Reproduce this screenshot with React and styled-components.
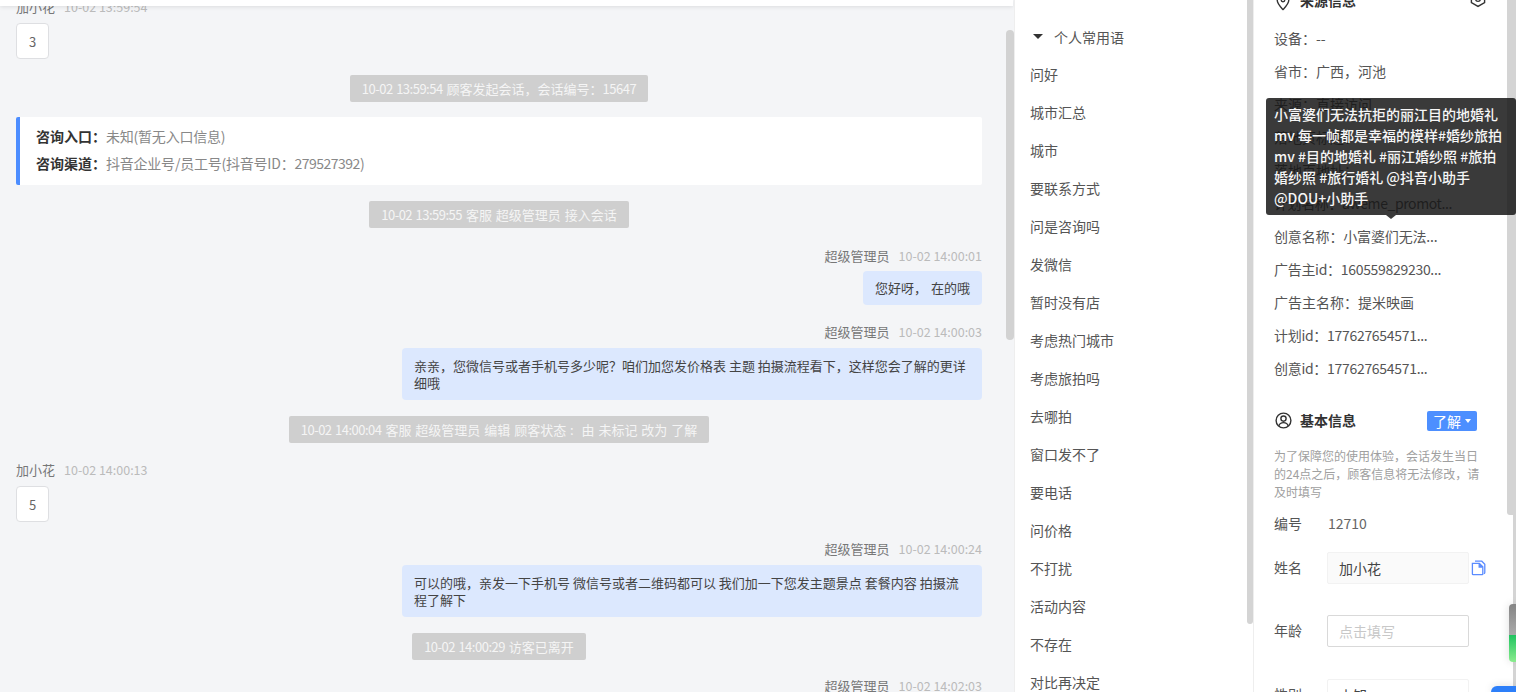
import React from "react";
import styled, { createGlobalStyle } from "styled-components";

const Global = createGlobalStyle`
  html, body { margin: 0; padding: 0; height: 100%; overflow: hidden; background: #fff; }
  body { font-family: "Noto Sans CJK SC", "Liberation Sans", sans-serif; font-size: 14px; color: #333; }
  * { box-sizing: border-box; }
`;

const Page = styled.div`
  display: grid;
  grid-template-columns: 1014px 240px 262px;
  height: 692px;
  overflow: hidden;
  position: relative;
`;

/* ---------- chat column ---------- */
const Chat = styled.section`
  position: relative;
  height: 692px;
  overflow: hidden;
  background: #f4f5f7;
`;
const TopBar = styled.div`
  position: absolute;
  z-index: 2;
  left: 0;
  top: 0;
  width: 1013px;
  height: 6px;
  background: #fff;
  box-shadow: 0 1px 4px rgba(0, 0, 0, 0.1);
`;
const ChatThumb = styled.div`
  position: absolute;
  left: 1006px;
  top: 30px;
  width: 8px;
  height: 310px;
  border-radius: 4px;
  background: #d2d2d2;
`;
const Log = styled.div`
  display: flex;
  flex-direction: column;
  margin-top: -3px;
  padding: 0 32px 0 16px;
`;
const Message = styled.div`
  display: flex;
  flex-direction: column;
  align-items: ${(p) => (p.$mine ? "flex-end" : "flex-start")};
  gap: ${(p) => p.$gap ?? 6}px;
  margin-top: ${(p) => p.$top ?? 17}px;
`;
const Meta = styled.div`
  display: flex;
  align-items: center;
  gap: 9px;
  height: 20px;
  line-height: 20px;
  font-size: 13px;
  color: #777;
`;
const Time = styled.span`
  color: #bbb;
  font-size: 12.5px;
`;
const Bubble = styled.div`
  max-width: 580px;
  padding: ${(p) => (p.$compact ? "8px 12px" : "9px 12px")};
  border-radius: 4px;
  background: #dce8fe;
  font-size: 13px;
  line-height: ${(p) => (p.$compact ? 18 : 17)}px;
  word-spacing: ${(p) => (p.$compact ? 1 : 0)}px;
  color: #444;
`;
const Reply = styled.div`
  display: flex;
  align-items: center;
  justify-content: center;
  width: 33px;
  height: 36px;
  border: 1px solid #dedfe2;
  border-radius: 4px;
  background: #fff;
  font-size: 13px;
  color: #666;
`;
const System = styled.div`
  align-self: center;
  height: 27px;
  margin-top: ${(p) => p.$top ?? 16}px;
  padding: 0 12px;
  border-radius: 2px;
  background: #cfcfcf;
  color: #f5f5f5;
  font-size: 13px;
  line-height: 28px;
  word-spacing: 1px;
  white-space: nowrap;
`;
const Digits = styled.span`
  letter-spacing: -0.5px;
`;
const EntryCard = styled.div`
  margin-top: 15px;
  padding: 6px 16px 8px;
  border-left: 4px solid #4c8dff;
  border-radius: 2px;
  background: #fff;
`;
const EntryRow = styled.div`
  height: 27px;
  line-height: 27px;
  font-size: 14px;
  color: #888;
`;
const EntryLabel = styled.span`
  color: #333;
  font-weight: 700;
`;
const EntryValue = styled.span`
  letter-spacing: -0.22px;
`;

/* ---------- phrases column ---------- */
const Phrases = styled.section`
  position: relative;
  height: 692px;
  overflow: hidden;
  padding: 18px 0 0 15px;
  background: #fff;
  border-left: 1px solid #eee;
  border-right: 1px solid #eee;
`;
const PhraseThumb = styled.div`
  position: absolute;
  right: 0;
  top: 0;
  width: 6px;
  height: 624px;
  border-radius: 0 0 3px 3px;
  background: #d4d4d4;
`;
const GroupHead = styled.div`
  display: flex;
  align-items: center;
  height: 37px;
  padding-left: 3px;
  color: #555;
  font-size: 14px;
`;
const Caret = styled.span`
  width: 0;
  height: 0;
  margin-right: 11px;
  border-left: 5px solid transparent;
  border-right: 5px solid transparent;
  border-top: 5px solid #333;
`;
const Phrase = styled.div`
  height: 38px;
  line-height: 38px;
  font-size: 14px;
  color: #555;
`;

/* ---------- info column ---------- */
const Info = styled.section`
  position: relative;
  height: 692px;
  overflow: hidden;
  background: #fff;
`;
const InfoBody = styled.div`
  display: flex;
  flex-direction: column;
  margin-top: -10px;
  padding: 0 0 0 20px;
`;
const SectionHead = styled.div`
  display: flex;
  align-items: center;
  width: ${(p) => p.$width ?? 203}px;
  height: 20px;
  margin-top: ${(p) => p.$top ?? 0}px;
`;
const SectionTitle = styled.span`
  margin-left: ${(p) => p.$gap ?? 8}px;
  flex: 1;
  font-size: 14px;
  line-height: 20px;
  font-weight: 700;
  color: #333;
`;
const Line = styled.div`
  height: 33px;
  line-height: 33px;
  font-size: 14px;
  color: #555;
  white-space: nowrap;
  letter-spacing: ${(p) => p.$tight ?? 0}px;
`;
const Lines = styled.div`
  margin-top: 12px;
`;
const LevelButton = styled.div`
  display: flex;
  align-items: center;
  justify-content: center;
  gap: 4px;
  width: 50px;
  height: 20px;
  margin-top: 2px;
  border-radius: 2px;
  background: #4d8fff;
  color: #fff;
  font-size: 14px;
  line-height: 20px;
`;
const SmallCaret = styled.span`
  width: 0;
  height: 0;
  border-left: 3.5px solid transparent;
  border-right: 3.5px solid transparent;
  border-top: 4px solid #fff;
`;
const Note = styled.p`
  width: 208px;
  margin: 17px 0 0;
  font-size: 12px;
  line-height: 18px;
  color: #a0a0a0;
`;
const Field = styled.div`
  display: flex;
  align-items: center;
  margin-top: ${(p) => p.$top}px;
  font-size: 14px;
  color: #555;
`;
const FieldLabel = styled.span`
  width: 53px;
  flex: none;
  margin-bottom: 2px;
  line-height: 20px;
`;
const StaticValue = styled.span`
  padding-left: 1px;
  line-height: 20px;
  color: #666;
  margin-bottom: 2px;
`;
const TextInput = styled.input`
  width: 142px;
  height: 32px;
  padding: 0 11px;
  border: 1px solid ${(p) => (p.$tone === "plain" ? "#d9d9d9" : "#f2f2f2")};
  border-radius: 2px;
  outline: none;
  background: ${(p) => (p.$tone === "locked" ? "#fafafa" : "#fff")};
  font: 14px "Noto Sans CJK SC", sans-serif;
  color: #444;
  &::placeholder { color: #c8c8c8; opacity: 1; }
`;
const CopyIcon = styled.svg`
  margin-left: 2px;
  flex: none;
`;
const Tooltip = styled.div`
  position: absolute;
  z-index: 4;
  left: 12px;
  top: 98px;
  width: 250px;
  height: 117px;
  padding: 6px 8px;
  border-radius: 3px;
  background: rgba(20, 20, 20, 0.84);
  color: #f6f6f6;
  font-size: 14px;
  font-weight: 500;
  line-height: 21px;
  &::after {
    content: "";
    position: absolute;
    left: 120px;
    bottom: -4px;
    border-left: 5px solid transparent;
    border-right: 5px solid transparent;
    border-top: 4px solid rgba(20, 20, 20, 0.84);
  }
`;
const InfoThumb = styled.div`
  position: absolute;
  right: 0;
  top: 0;
  width: 9px;
  height: 515px;
  border-radius: 0 0 0 3px;
  background: #d4d4d4;
`;
const InfoTrack = styled.div`
  position: absolute;
  right: 0;
  top: 515px;
  width: 3px;
  height: 177px;
  background: #d4d4d4;
`;
const Meter = styled.div`
  position: absolute;
  z-index: 3;
  right: 0;
  top: 604px;
  width: 7px;
  height: 58px;
  border-radius: 4px 0 0 4px;
  background: linear-gradient(#858585 0, #aaa 53%, #1fc35f 53%, #8aec8e 100%);
  box-shadow: 0 0 8px rgba(0, 0, 0, 0.14);
`;
const Launcher = styled.div`
  position: absolute;
  z-index: 3;
  right: 0;
  top: 686px;
  width: 25px;
  height: 6px;
  border-radius: 6px 0 0 0;
  background: #2d7ff9;
  box-shadow: 0 0 8px rgba(0, 0, 0, 0.15);
`;

const PinIcon = () => (
  <svg width="14" height="18" viewBox="0 0 14 18" fill="none" stroke="#333" strokeWidth="1.4" style={{ marginLeft: 2, marginTop: 3, flex: "none" }}>
    <path d="M7 16.6C4 13.4 1.2 10.6 1.2 7A5.8 5.8 0 0 1 12.8 7c0 3.6-2.8 6.4-5.8 9.6z" />
    <circle cx="7" cy="7" r="1.8" />
  </svg>
);
const HexIcon = () => (
  <svg width="16" height="18" viewBox="0 0 16 18" fill="none" stroke="#333" strokeWidth="1.4" style={{ flex: "none", marginTop: -3 }}>
    <path d="M8 1.2l6.6 3.8v7.6L8 16.4 1.4 12.6V5z" />
    <circle cx="8" cy="9" r="2.4" />
  </svg>
);
const UserIcon = () => (
  <svg width="17" height="17" viewBox="0 0 17 17" fill="none" stroke="#333" strokeWidth="1.4" style={{ flex: "none", marginLeft: 1 }}>
    <circle cx="8.5" cy="8.5" r="7.4" />
    <circle cx="8.5" cy="6.6" r="2.6" />
    <path d="M3.8 14c.6-2.2 2.4-3.4 4.7-3.4s4.1 1.2 4.7 3.4" />
  </svg>
);

const phrases = ["问好", "城市汇总", "城市", "要联系方式", "问是咨询吗", "发微信", "暂时没有店", "考虑热门城市", "考虑旅拍吗", "去哪拍", "窗口发不了", "要电话", "问价格", "不打扰", "活动内容", "不存在", "对比再决定"];
const sourceLines = [
  { text: "设备：--" },
  { text: "省市：广西，河池" },
  { text: "来源：直接访问" },
  { text: "落地页标题：" },
  { text: "落地页地址：" },
  { text: "计划名称：aweme_promot...", tight: -0.4 },
  { text: "创意名称：小富婆们无法...", tight: -0.15 },
  { text: "广告主id：160559829230...", tight: -0.3 },
  { text: "广告主名称：提米映画" },
  { text: "计划id：177627654571...", tight: -0.3 },
  { text: "创意id：177627654571...", tight: -0.3 },
];

export default function App() {
  return (
    <Page>
      <Global />
      <Chat>
        <TopBar />
        <Log>
          <Message $top={0}>
            <Meta>加小花<Time>10-02 13:59:54</Time></Meta>
            <Reply>3</Reply>
          </Message>
          <System><Digits>10-02 13:59:54</Digits> 顾客发起会话，会话编号：<Digits>15647</Digits></System>
          <EntryCard>
            <EntryRow><EntryLabel>咨询入口：</EntryLabel><EntryValue>未知(暂无入口信息)</EntryValue></EntryRow>
            <EntryRow><EntryLabel>咨询渠道：</EntryLabel><EntryValue>抖音企业号/员工号(抖音号ID：<Digits>279527392</Digits>)</EntryValue></EntryRow>
          </EntryCard>
          <System><Digits>10-02 13:59:55</Digits> 客服 超级管理员 接入会话</System>
          <Message $mine $top={18} $gap={5}>
            <Meta>超级管理员<Time>10-02 14:00:01</Time></Meta>
            <Bubble $compact>您好呀， 在的哦</Bubble>
          </Message>
          <Message $mine>
            <Meta>超级管理员<Time>10-02 14:00:03</Time></Meta>
            <Bubble>亲亲，您微信号或者手机号多少呢？咱们加您发价格表 主题 拍摄流程看下，这样您会了解的更详细哦</Bubble>
          </Message>
          <System><Digits>10-02 14:00:04</Digits> 客服 超级管理员 编辑 顾客状态 :&nbsp; 由 未标记 改为 了解</System>
          <Message>
            <Meta>加小花<Time>10-02 14:00:13</Time></Meta>
            <Reply>5</Reply>
          </Message>
          <Message $mine>
            <Meta>超级管理员<Time>10-02 14:00:24</Time></Meta>
            <Bubble>可以的哦，亲发一下手机号 微信号或者二维码都可以 我们加一下您发主题景点 套餐内容 拍摄流程了解下</Bubble>
          </Message>
          <System><Digits>10-02 14:00:29</Digits> 访客已离开</System>
          <Message $mine $top={16}>
            <Meta>超级管理员<Time>10-02 14:02:03</Time></Meta>
          </Message>
        </Log>
        <ChatThumb />
      </Chat>

      <Phrases>
        <GroupHead><Caret />个人常用语</GroupHead>
        {phrases.map((p) => <Phrase key={p}>{p}</Phrase>)}
        <PhraseThumb />
      </Phrases>

      <Info>
        <InfoBody>
          <SectionHead $width={212}>
            <PinIcon />
            <SectionTitle $gap={10}>来源信息</SectionTitle>
            <HexIcon />
          </SectionHead>
          <Lines>
            {sourceLines.map((l) => <Line key={l.text} $tight={l.tight}>{l.text}</Line>)}
          </Lines>
          <SectionHead $top={25}>
            <UserIcon />
            <SectionTitle>基本信息</SectionTitle>
            <LevelButton>了解<SmallCaret /></LevelButton>
          </SectionHead>
          <Note>为了保障您的使用体验，会话发生当日的24点之后，顾客信息将无法修改，请及时填写</Note>
          <Field $top={12}><FieldLabel>编号</FieldLabel><StaticValue>12710</StaticValue></Field>
          <Field $top={17}>
            <FieldLabel>姓名</FieldLabel>
            <TextInput $tone="locked" readOnly defaultValue="加小花" />
            <CopyIcon width="15" height="16" viewBox="0 0 15 16" fill="none" stroke="#5b8cff" strokeWidth="1.3">
              <path d="M4 1.2h6.8l3 3v8.4a1 1 0 0 1-1 1" />
              <path d="M1.4 3.4h7l3.4 3.4v7.2a.7.7 0 0 1-.7.7H2.1a.7.7 0 0 1-.7-.7z" fill="#fff" />
              <path d="M8.2 3.4v3.6h3.6" fill="#5b8cff" />
            </CopyIcon>
          </Field>
          <Field $top={31}>
            <FieldLabel>年龄</FieldLabel>
            <TextInput $tone="plain" readOnly placeholder="点击填写" />
          </Field>
          <Field $top={32}>
            <FieldLabel>性别</FieldLabel>
            <TextInput $tone="soft" readOnly defaultValue="未知" />
          </Field>
        </InfoBody>
        <InfoThumb />
        <InfoTrack />
        <Tooltip>小富婆们无法抗拒的丽江目的地婚礼mv 每一帧都是幸福的模样#婚纱旅拍mv #目的地婚礼 #丽江婚纱照 #旅拍婚纱照 #旅行婚礼 @抖音小助手 @DOU+小助手</Tooltip>
        <Meter />
        <Launcher />
      </Info>
    </Page>
  );
}
